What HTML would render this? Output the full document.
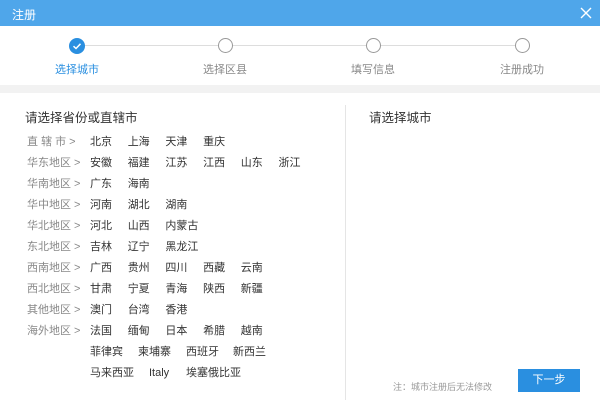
<!DOCTYPE html>
<html><head><meta charset="utf-8"><style>
*{margin:0;padding:0;box-sizing:border-box}
body{width:600px;height:409px;overflow:hidden;background:#fff;font-family:"Liberation Sans","Noto Sans CJK SC",sans-serif;position:relative;color:#333}
.a{position:absolute;white-space:nowrap}
.bar{left:0;top:0;width:600px;height:26px;background:#4fa6ea}
.c{width:15px;height:15px;border:1.5px solid #999;border-radius:50%;background:#fff;top:38px}
.sl{top:61px;font-size:11px;color:#888}
.lab{font-size:11px;color:#888;left:27px;line-height:14px}
.v{font-size:11px;color:#333;line-height:14px}
</style></head><body>
<div class="a bar"></div>
<div class="a" style="left:12px;top:6px;font-size:12px;color:#fff">注册</div>
<svg class="a" style="left:580px;top:7px" width="12" height="12"><path d="M1 1L11 11M11 1L1 11" stroke="#fff" stroke-width="1.4"/></svg>
<div class="a" style="left:84px;top:45px;width:432px;height:1px;background:#ddd"></div>
<div class="a" style="left:69px;top:38px;width:16px;height:16px;border-radius:50%;background:#2a8fe0"></div>
<svg class="a" style="left:69px;top:38px" width="16" height="16"><path d="M4.5 8.2L7 10.5L11.5 5.8" stroke="#fff" stroke-width="1.5" fill="none"/></svg>
<div class="a c" style="left:218px"></div>
<div class="a c" style="left:366px"></div>
<div class="a c" style="left:515px"></div>
<div class="a sl" style="left:55px;color:#2a8fe0">选择城市</div>
<div class="a sl" style="left:203px">选择区县</div>
<div class="a sl" style="left:351px">填写信息</div>
<div class="a sl" style="left:500px">注册成功</div>
<div class="a" style="left:0;top:85px;width:600px;height:8px;background:#f2f2f2"></div>
<div class="a" style="left:345px;top:105px;width:1px;height:295px;background:#e5e5e5"></div>
<div class="a" style="left:25px;top:107px;font-size:12.5px;color:#333">请选择省份或直辖市</div>
<div class="a" style="left:369px;top:107px;font-size:12.5px;color:#333">请选择城市</div>
<div id="rows"></div>
<div class="a" style="left:393px;top:380px;font-size:9px;color:#999">注：城市注册后无法修改</div>
<div class="a" style="left:518px;top:369px;width:62px;height:23px;background:#2a8fe0;color:#fff;font-size:11px;text-align:center;line-height:23px">下一步</div>
<script>
var R=[["直 辖 市 >",["北京","上海","天津","重庆"]],["华东地区 >",["安徽","福建","江苏","江西","山东","浙江"]],["华南地区 >",["广东","海南"]],["华中地区 >",["河南","湖北","湖南"]],["华北地区 >",["河北","山西","内蒙古"]],["东北地区 >",["吉林","辽宁","黑龙江"]],["西南地区 >",["广西","贵州","四川","西藏","云南"]],["西北地区 >",["甘肃","宁夏","青海","陕西","新疆"]],["其他地区 >",["澳门","台湾","香港"]],["海外地区 >",["法国","缅甸","日本","希腊","越南"]]];
var h="";R.forEach(function(r,i){var y=135+i*21;h+='<div class="a lab" style="top:'+y+'px">'+r[0]+'</div>';r[1].forEach(function(v,j){h+='<div class="a v" style="top:'+y+'px;left:'+(90+j*37.7)+'px">'+v+'</div>'})});
[["菲律宾",90],["柬埔寨",138],["西班牙",186],["新西兰",233]].forEach(function(a){h+='<div class="a v" style="top:345px;left:'+a[1]+'px">'+a[0]+'</div>'});
[["马来西亚",90],["Italy",149],["埃塞俄比亚",186]].forEach(function(a){h+='<div class="a v" style="top:366px;left:'+a[1]+'px">'+a[0]+'</div>'});
document.getElementById("rows").innerHTML=h;
</script>
</body></html>
